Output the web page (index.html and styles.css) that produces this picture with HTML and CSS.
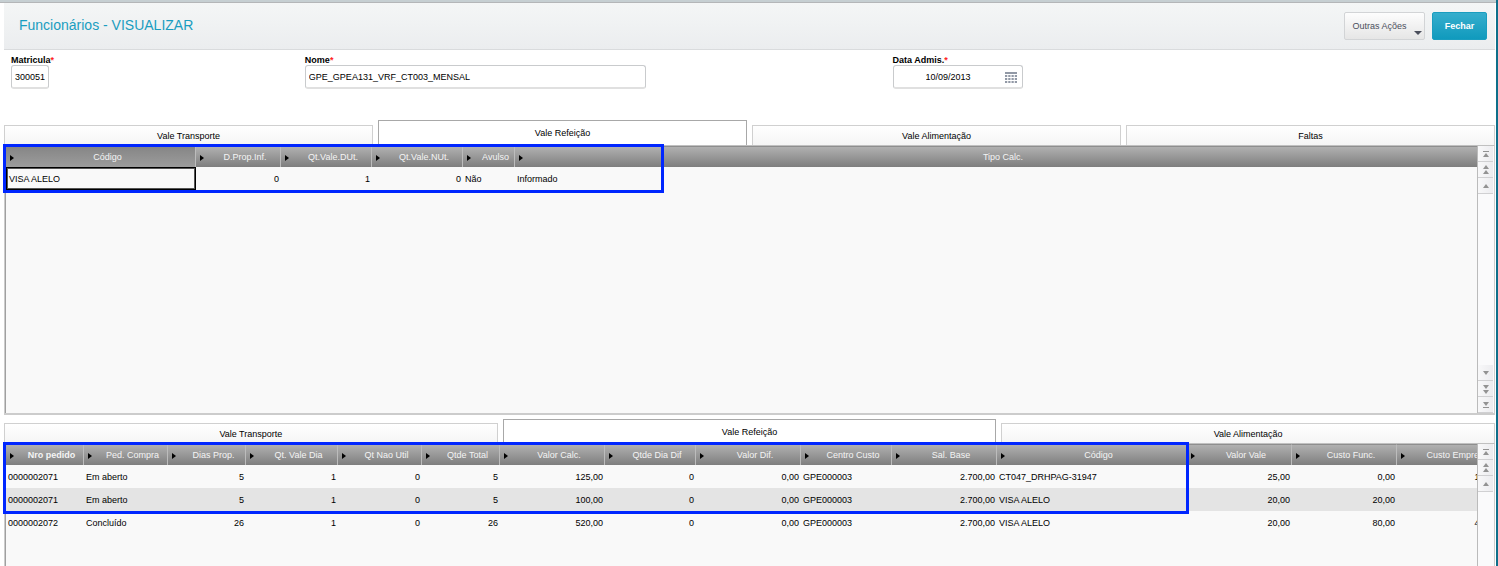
FILE: index.html
```
<!DOCTYPE html>
<html lang="pt-BR">
<head>
    <meta charset="UTF-8">
    <meta name="viewport" content="width=device-width, initial-scale=1.0">
    <title>Funcionários - VISUALIZAR</title>
    <link rel="stylesheet" href="styles.css">
</head>
<body>
    <div class="window">
        <header class="header">
            <h1>Funcionários - VISUALIZAR</h1>
            <div class="actions">
                <button class="btn btn-menu" type="button">Outras Ações</button>
                <button class="btn btn-primary" type="button">Fechar</button>
            </div>
        </header>

        <form class="fields">
            <div class="field">
                <label for="matricula">Matricula<span class="required">*</span></label>
                <input class="input-matricula" id="matricula" type="text" value="300051" readonly>
            </div>
            <div class="field">
                <label for="nome">Nome<span class="required">*</span></label>
                <input class="input-nome" id="nome" type="text" value="GPE_GPEA131_VRF_CT003_MENSAL" readonly>
            </div>
            <div class="field">
                <label for="admissao">Data Admis.<span class="required">*</span></label>
                <div class="date-box">
                    <input class="input-data" id="admissao" type="text" value="10/09/2013" readonly>
                    <svg class="calendar" viewBox="0 0 12 11" width="12" height="11">
                        <path d="M0 1h12" stroke="#9299a6" stroke-width="2"/>
                        <path d="M0 4h12M0 7h12M0 10h12" stroke="#9299a6" stroke-width="2" stroke-dasharray="2.25 1"/>
                    </svg>
                </div>
            </div>
        </form>

        <!-- Beneficios -->
        <nav class="tabs">
            <button class="tab" type="button">Vale Transporte</button>
            <button class="tab active" type="button">Vale Refeição</button>
            <button class="tab" type="button">Vale Alimentação</button>
            <button class="tab" type="button">Faltas</button>
        </nav>
        <section class="panel panel-top">
            <div class="table-area">
                <table class="table-beneficios">
                    <colgroup>
                        <col class="w190"><col class="w85"><col class="w91"><col class="w91"><col class="w52"><col>
                    </colgroup>
                    <thead>
                        <tr>
                            <th class="sorted">Código</th>
                            <th>D.Prop.Inf.</th>
                            <th>Qt.Vale.DUt.</th>
                            <th>Qt.Vale.NUt.</th>
                            <th>Avulso</th>
                            <th>Tipo Calc.</th>
                        </tr>
                    </thead>
                    <tbody>
                        <tr>
                            <td class="selected">VISA ALELO</td>
                            <td class="num">0</td>
                            <td class="num">1</td>
                            <td class="num">0</td>
                            <td>Não</td>
                            <td>Informado</td>
                        </tr>
                    </tbody>
                </table>
            </div>
            <div class="scroll">
                <button type="button" aria-label="Primeiro"><svg viewBox="0 0 8 10" width="8" height="10"><path d="M1 8h6L4 4zM1 2h6v1H1z"/></svg></button>
                <button type="button" aria-label="Página anterior"><svg viewBox="0 0 8 10" width="8" height="10"><path d="M1 4h6L4 0zM1 9h6L4 5z"/></svg></button>
                <button type="button" aria-label="Anterior"><svg viewBox="0 0 8 10" width="8" height="10"><path d="M1 7h6L4 3z"/></svg></button>
                <button class="down" type="button" aria-label="Próximo"><svg viewBox="0 0 8 10" width="8" height="10"><path d="M1 3h6L4 7z"/></svg></button>
                <button type="button" aria-label="Próxima página"><svg viewBox="0 0 8 10" width="8" height="10"><path d="M1 1h6L4 5zM1 6h6L4 10z"/></svg></button>
                <button type="button" aria-label="Último"><svg viewBox="0 0 8 10" width="8" height="10"><path d="M1 2h6L4 6zM1 7h6v1H1z"/></svg></button>
            </div>
            <div class="mark mark-beneficios"></div>
        </section>

        <!-- Pedidos -->
        <nav class="tabs tabs-pedidos">
            <button class="tab" type="button">Vale Transporte</button>
            <button class="tab active" type="button">Vale Refeição</button>
            <button class="tab" type="button">Vale Alimentação</button>
        </nav>
        <section class="panel panel-bottom">
            <div class="table-area">
                <table class="table-pedidos">
                    <colgroup>
                        <col class="w78"><col class="w84"><col class="w78"><col class="w92"><col class="w84">
                        <col class="w78"><col class="w105"><col class="w91"><col class="w105"><col class="w91">
                        <col class="w105"><col class="w190"><col class="w105"><col class="w105"><col>
                    </colgroup>
                    <thead>
                        <tr>
                            <th class="strong">Nro pedido</th>
                            <th>Ped. Compra</th>
                            <th>Dias Prop.</th>
                            <th>Qt. Vale Dia</th>
                            <th>Qt Nao Util</th>
                            <th>Qtde Total</th>
                            <th>Valor Calc.</th>
                            <th>Qtde Dia Dif</th>
                            <th>Valor Dif.</th>
                            <th>Centro Custo</th>
                            <th>Sal. Base</th>
                            <th>Código</th>
                            <th>Valor Vale</th>
                            <th>Custo Func.</th>
                            <th>Custo Empresa</th>
                        </tr>
                    </thead>
                    <tbody>
                        <tr>
                            <td>0000002071</td>
                            <td>Em aberto</td>
                            <td class="num">5</td>
                            <td class="num">1</td>
                            <td class="num">0</td>
                            <td class="num">5</td>
                            <td class="num">125,00</td>
                            <td class="num">0</td>
                            <td class="num">0,00</td>
                            <td>GPE000003</td>
                            <td class="num">2.700,00</td>
                            <td>CT047_DRHPAG-31947</td>
                            <td class="num">25,00</td>
                            <td class="num">0,00</td>
                            <td class="num">125,00</td>
                        </tr>
                        <tr>
                            <td>0000002071</td>
                            <td>Em aberto</td>
                            <td class="num">5</td>
                            <td class="num">1</td>
                            <td class="num">0</td>
                            <td class="num">5</td>
                            <td class="num">100,00</td>
                            <td class="num">0</td>
                            <td class="num">0,00</td>
                            <td>GPE000003</td>
                            <td class="num">2.700,00</td>
                            <td>VISA ALELO</td>
                            <td class="num">20,00</td>
                            <td class="num">20,00</td>
                            <td class="num">80,00</td>
                        </tr>
                        <tr>
                            <td>0000002072</td>
                            <td>Concluído</td>
                            <td class="num">26</td>
                            <td class="num">1</td>
                            <td class="num">0</td>
                            <td class="num">26</td>
                            <td class="num">520,00</td>
                            <td class="num">0</td>
                            <td class="num">0,00</td>
                            <td>GPE000003</td>
                            <td class="num">2.700,00</td>
                            <td>VISA ALELO</td>
                            <td class="num">20,00</td>
                            <td class="num">80,00</td>
                            <td class="num">440,00</td>
                        </tr>
                    </tbody>
                </table>
            </div>
            <div class="scroll">
                <button type="button" aria-label="Primeiro"><svg viewBox="0 0 8 10" width="8" height="10"><path d="M1 8h6L4 4zM1 2h6v1H1z"/></svg></button>
                <button type="button" aria-label="Página anterior"><svg viewBox="0 0 8 10" width="8" height="10"><path d="M1 4h6L4 0zM1 9h6L4 5z"/></svg></button>
                <button type="button" aria-label="Anterior"><svg viewBox="0 0 8 10" width="8" height="10"><path d="M1 7h6L4 3z"/></svg></button>
            </div>
            <div class="mark mark-pedidos"></div>
        </section>
    </div>
</body>
</html>
```
FILE: styles.css
```
* {
    box-sizing: border-box;
}
body {
    margin: 0;
    font-family: "Liberation Sans", Arial, sans-serif;
    font-size: 9px;
    color: #000;
    background-color: #fff;
}
button,
input {
    font-family: inherit;
    font-size: inherit;
    color: inherit;
}
.window {
    display: flex;
    flex-direction: column;
    height: 100vh;
    overflow: hidden;
    padding: 0 1px 0 4px;
    border-right: 2px solid #0e6f8a;
    background: linear-gradient(#c6cfd2 0, #c6cfd2 2px, #b4b6b8 2px, #b4b6b8 3px, #fff 3px);
}

/* Header */
.header {
    display: flex;
    flex-shrink: 0;
    align-items: center;
    justify-content: space-between;
    height: 47px;
    margin-top: 3px;
    padding: 0 8px 0 15px;
    background: linear-gradient(#f4f6f6, #ebedef);
    border-bottom: 1px solid #d9dbdd;
}
.header h1 {
    margin: 0 0 3px;
    font-size: 14px;
    font-weight: normal;
    color: #1a9dc0;
}
.actions {
    display: flex;
    gap: 7px;
}
.btn {
    height: 28px;
    border-radius: 2px;
}
.btn-menu {
    position: relative;
    width: 81px;
    padding: 0 10px 0 0;
    color: #4b4f5c;
    background: linear-gradient(#fdfdfd, #e6e6e6);
    border: 1px solid #d2d4d6;
}
.btn-menu::after {
    content: "";
    position: absolute;
    right: 2px;
    bottom: 4px;
    border: 4px solid transparent;
    border-top-color: #4b4f5c;
    border-bottom: 0;
}
.btn-primary {
    width: 55px;
    padding: 0;
    font-weight: bold;
    color: #fff;
    background: linear-gradient(#36aecd, #109abd);
    border: 1px solid #1a9dbf;
}

/* Fields */
.fields {
    display: grid;
    flex-shrink: 0;
    grid-template-columns: 20fr 40fr 41fr;
    padding: 5px 0 0 7px;
    height: 70px;
}
.field label {
    display: block;
    height: 10px;
    line-height: 10px;
    font-weight: bold;
}
.required {
    color: #f22;
}
.field input {
    display: block;
    height: 24px;
    padding: 0 3px;
    background-color: #fff;
    border: 1px solid #c9cbcd;
    border-bottom: 2px solid #e0e0e0;
    border-radius: 3px;
}
.field .input-matricula {
    width: 38px;
}
.field .input-nome {
    width: 341px;
}
.date-box {
    display: flex;
    align-items: center;
}
.field .input-data {
    width: 130px;
    padding-left: 32px;
}
.calendar {
    margin-left: -18px;
}

/* Tabs */
.tabs {
    display: flex;
    flex-shrink: 0;
    align-items: flex-end;
    gap: 5px;
    height: 25px;
}
.tabs-pedidos {
    margin-top: 4px;
    height: 24px;
}
.tab {
    flex: 1;
    height: 20px;
    padding: 0;
    background: linear-gradient(#fff, #f5f5f5);
    border: 1px solid #d0d0d0;
    border-bottom: 0;
}
.tab.active {
    height: 25px;
    background: #fff;
    border-color: #a8a8a8;
}
.tabs-pedidos .tab.active {
    height: 24px;
}

/* Grids */
.panel {
    position: relative;
    display: flex;
    border: 1px solid #ccc;
    border-top-color: #c0c0c0;
}
.panel-top {
    flex-shrink: 0;
    height: 270px;
    border-bottom-width: 2px;
}
.panel-bottom {
    flex: 1;
    border-bottom: 0;
}
.table-area {
    flex: 1;
    min-width: 0;
    overflow: hidden;
    background-color: #f9f9f9;
    border-left: 1px solid #a0a0a0;
    border-right: 1px solid #bbb;
}
table {
    table-layout: fixed;
    width: 100%;
    border-collapse: separate;
    border-spacing: 0;
}
.table-pedidos {
    width: 1498px;
}
.w52 { width: 52px; }
.w78 { width: 78px; }
.w84 { width: 84px; }
.w85 { width: 85px; }
.w91 { width: 91px; }
.w92 { width: 92px; }
.w105 { width: 105px; }
.w190 { width: 190px; }
th {
    position: relative;
    height: 21px;
    padding: 0 0 0 14px;
    font-weight: normal;
    white-space: nowrap;
    color: #f4f4f4;
    background: linear-gradient(#b0b0b0, #7e7e7e);
    border-top: 1px solid #8e8e8e;
    border-right: 1px solid #bcbcbc;
}
th:last-child {
    border-right: 0;
}
th::before {
    content: "";
    position: absolute;
    left: 4px;
    top: 8px;
    border: 3px solid transparent;
    border-left: 4px solid #000;
    border-right: 0;
}
th.sorted {
    background: linear-gradient(#868686, #9c9c9c);
}
th.strong {
    font-weight: bold;
}
td {
    height: 23px;
    padding: 0 2px;
    white-space: nowrap;
}
tbody tr:nth-child(even) {
    background-color: #e4e4e4;
}
td.num {
    text-align: right;
}
td.selected {
    border: 1px solid #000;
    box-shadow: inset 0 0 0 1px #555;
}

/* Scroll buttons */
.scroll {
    display: flex;
    flex-direction: column;
    width: 16px;
    padding-right: 1px;
    background-color: #fafafb;
}
.scroll button {
    display: flex;
    align-items: center;
    justify-content: center;
    height: 16px;
    padding: 0;
    background: linear-gradient(90deg, #f8f8f9, #ececef);
    border: 0;
    border-bottom: 1px solid #d0d0d2;
}
.scroll .down {
    margin-top: auto;
}
.scroll path {
    fill: #929292;
}

/* Highlighted records */
.mark {
    position: absolute;
    top: -2px;
    left: -2px;
    border: 3px solid #0026ff;
    pointer-events: none;
}
.mark-beneficios {
    width: 661px;
    height: 49px;
}
.mark-pedidos {
    width: 1186px;
    height: 72px;
}
```
